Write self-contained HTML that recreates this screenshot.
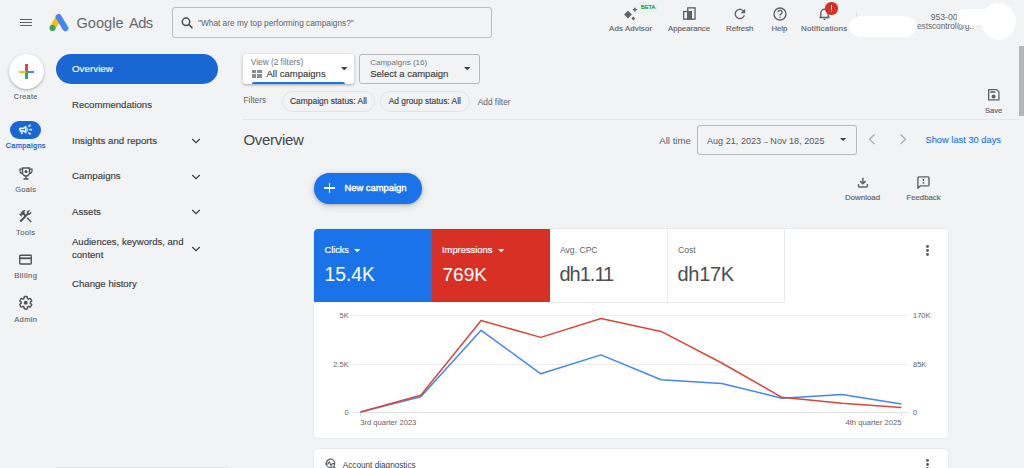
<!DOCTYPE html>
<html><head><meta charset="utf-8">
<style>
html,body{margin:0;padding:0;width:1024px;height:468px;overflow:hidden;background:#f1f3f4;font-family:"Liberation Sans",sans-serif;}
.t{position:absolute;white-space:nowrap;line-height:1;}
.a{position:absolute;}
.g{color:#5f6368;}
.d{color:#3c4043;}
.m{-webkit-text-stroke:0.15px currentColor;}
svg{position:absolute;overflow:visible;}
</style></head><body>

<!-- ===== TOP BAR ===== -->
<div class="a" style="left:20px;top:19px;width:12px;height:1.3px;background:#5f6368"></div>
<div class="a" style="left:20px;top:22px;width:12px;height:1.3px;background:#5f6368"></div>
<div class="a" style="left:20px;top:25.2px;width:12px;height:1.3px;background:#5f6368"></div>

<svg style="left:49px;top:13px" width="21" height="19" viewBox="0 0 21 19">
  <path d="M9.8 4.6 L3.6 14.8" stroke="#fbbc04" stroke-width="6" stroke-linecap="butt"/>
  <path d="M9.6 4 L16.4 15.2" stroke="#4285f4" stroke-width="6" stroke-linecap="round"/>
  <circle cx="3.5" cy="15" r="3" fill="#34a853"/>
</svg>
<div class="t g" style="left:76.5px;top:15.6px;font-size:14.6px;color:#666a6f">Google</div><div class="t g" style="left:129px;top:15.6px;font-size:14.6px;letter-spacing:-0.6px;color:#666a6f">Ads</div>

<div class="a" style="left:172px;top:7.2px;width:318px;height:29px;border:1px solid #babdc1;border-radius:3px;"></div>
<svg style="left:181px;top:16.5px" width="13" height="12" viewBox="0 0 13 12">
  <circle cx="5" cy="4.8" r="3.7" fill="none" stroke="#4a4e53" stroke-width="1.5"/>
  <path d="M7.6 7.4 L11.5 11.3" stroke="#4a4e53" stroke-width="1.6"/>
</svg>
<div class="t g" style="left:198px;top:19px;font-size:8.3px">"What are my top performing campaigns?"</div>

<!-- top right icons -->
<svg style="left:620px;top:5px" width="20" height="18" viewBox="0 0 20 18">
  <path d="M8 5.7 L11.9 9.6 L8 13.5 L4.1 9.6 Z" fill="#5f6368"/>
  <path d="M14.9 2 Q15.3 4.3 17.6 4.7 Q15.3 5.1 14.9 7.4 Q14.5 5.1 12.2 4.7 Q14.5 4.3 14.9 2 Z" fill="#5f6368"/>
  <path d="M13.3 11.6 L15.2 13.5 L13.3 15.4 L11.4 13.5 Z" fill="#5f6368"/>
</svg>
<div class="a" style="left:638.8px;top:3.1px;width:18.9px;height:9.7px;background:#e6f4ea;border-radius:2px"></div>
<div class="t" style="left:641.1px;top:4.6px;font-size:5.5px;color:#1e8e3e;letter-spacing:0.05px;-webkit-text-stroke:0.2px #1e8e3e">BETA</div>
<div class="t g m" style="left:609px;top:24.7px;font-size:7.9px;letter-spacing:0.14px">Ads Advisor</div>

<svg style="left:682px;top:7px" width="15" height="14" viewBox="0 0 15 14">
  <rect x="5.5" y="4" width="4.5" height="8.8" fill="#5f6368"/>
  <rect x="5.75" y="0.85" width="7.3" height="11.3" fill="none" stroke="#5f6368" stroke-width="1.35"/>
  <rect x="1.65" y="4.55" width="4.1" height="7.6" fill="none" stroke="#5f6368" stroke-width="1.35"/>
</svg>
<div class="t g m" style="left:668px;top:24.8px;font-size:7.8px">Appearance</div>

<svg style="left:732.4px;top:5.7px" width="15.8" height="15.8" viewBox="0 0 24 24">
  <path d="M17.65 6.35C16.2 4.9 14.21 4 12 4c-4.42 0-7.99 3.58-7.99 8s3.57 8 7.99 8c3.73 0 6.84-2.55 7.730-6h-2.080c-.82 2.33-3.04 4-5.65 4-3.31 0-6-2.69-6-6s2.69-6 6-6c1.66 0 3.14.69 4.22 1.78L13 11h7V4l-2.35 2.35z" fill="#5f6368"/>
</svg>
<div class="t g m" style="left:726px;top:24.8px;font-size:7.85px">Refresh</div>

<svg style="left:772.5px;top:6.5px" width="14" height="14" viewBox="0 0 14 14">
  <circle cx="7" cy="7" r="6" fill="none" stroke="#5f6368" stroke-width="1.4"/>
  <path d="M5 5.3 A2 2 0 1 1 7.8 7.1 Q7 7.6 7 8.6" fill="none" stroke="#5f6368" stroke-width="1.3"/>
  <circle cx="7" cy="10.3" r="0.8" fill="#5f6368"/>
</svg>
<div class="t g m" style="left:771.5px;top:24.8px;font-size:7.7px">Help</div>

<svg style="left:818px;top:7px" width="14" height="14" viewBox="0 0 14 14">
  <path d="M2 10.5 L2.8 9.5 L2.8 6 A3.7 3.7 0 0 1 10.2 6 L10.2 9.5 L11 10.5 Z" fill="none" stroke="#5f6368" stroke-width="1.4" stroke-linejoin="round"/>
  <rect x="5.5" y="11.6" width="2" height="1.4" fill="#5f6368"/>
</svg>
<div class="a" style="left:825.3px;top:2.3px;width:12.4px;height:12.4px;border-radius:50%;background:#d93025"></div>
<div class="a" style="left:830.6px;top:4.5px;width:1.8px;height:5px;background:#fff;border-radius:1px"></div>
<div class="a" style="left:830.6px;top:10.6px;width:1.8px;height:1.8px;background:#fff;border-radius:1px"></div>
<div class="t g m" style="left:801px;top:24.7px;font-size:7.9px;letter-spacing:0.26px">Notifications</div>

<div class="a" style="left:856px;top:13px;width:1px;height:6px;background:#dadce0"></div>
<div class="t" style="left:930.7px;top:13.3px;font-size:8.6px;color:#63676c">953-00</div>
<div class="t" style="left:917px;top:23.4px;font-size:8.2px;color:#63676c">estscontrol@g..</div>
<!-- white redaction blobs -->
<div class="a" style="left:849.3px;top:15.5px;width:68px;height:21.6px;background:#fff;border-radius:14px/10.8px;"></div>
<div class="a" style="left:957px;top:8.8px;width:35px;height:16.2px;background:#fff;border-radius:6px 0 0 6px/8px 0 0 8px;"></div>
<div class="a" style="left:981.3px;top:3px;width:34.7px;height:37px;background:#fff;border-radius:50%;"></div>

<!-- ===== LEFT RAIL ===== -->
<div class="a" style="left:8.7px;top:53.8px;width:35.5px;height:35.5px;border-radius:50%;background:#fff;box-shadow:0 1px 3px rgba(60,64,67,.3),0 1px 2px rgba(60,64,67,.15)"></div>
<div class="a" style="left:25.2px;top:64px;width:2.4px;height:7.6px;background:#ea4335"></div>
<div class="a" style="left:25.2px;top:71.6px;width:2.4px;height:7.8px;background:#34a853"></div>
<div class="a" style="left:18.6px;top:70.5px;width:7.6px;height:2.2px;background:#fbbc04"></div>
<div class="a" style="left:26.5px;top:70.5px;width:7.6px;height:2.2px;background:#4285f4"></div>
<div class="t g" style="left:-0.23px;width:52px;text-align:center;top:92.59px;font-size:7.3px;letter-spacing:0.35px;-webkit-text-stroke:0.1px #4f5358">Create</div>

<div class="a" style="left:10px;top:120.8px;width:31px;height:18px;border-radius:9px;background:#1a67d2"></div>
<svg style="left:18px;top:121.6px" width="15.2" height="15.2" viewBox="0 0 24 24">
  <path d="M18 11v2h4v-2h-4zm-2 6.61c.96.71 2.21 1.65 3.2 2.39.4-.53.8-1.07 1.2-1.6-.99-.74-2.240-1.68-3.2-2.4-.4.54-.8 1.08-1.2 1.61zM20.4 5.6c-.4-.53-.8-1.070-1.2-1.6-.99.74-2.24 1.68-3.2 2.4.4.53.8 1.07 1.2 1.6.96-.72 2.21-1.65 3.2-2.4zM4 9c-1.1 0-2 .9-2 2v2c0 1.1.9 2 2 2h1v4h2v-4h1l5 3V6L8 9H4zm5.03 1.71L11 9.53v4.94l-1.97-1.18-.48-.29H4v-2h4.550l.48-.29zM15.5 12c0-1.33-.58-2.53-1.5-3.35v6.69c.92-.81 1.5-2.010 1.5-3.34z" fill="#fff" stroke="#fff" stroke-width="0.4"/>
</svg>
<div class="t" style="left:-0.25px;width:52px;text-align:center;top:142.31px;font-size:7.4px;letter-spacing:0.3px;color:#1967d2;-webkit-text-stroke:0.25px #1967d2">Campaigns</div>

<svg style="left:19px;top:166.5px" width="14" height="13" viewBox="0 0 14 13">
  <path d="M3.5 1 L10.5 1 L10.5 5.5 A3.5 3.5 0 0 1 3.5 5.5 Z" fill="none" stroke="#4f5358" stroke-width="1.4"/>
  <path d="M3.5 2.2 L1 2.2 L1 4 A2.5 2.5 0 0 0 3.5 6.5 M10.5 2.2 L13 2.2 L13 4 A2.5 2.5 0 0 1 10.5 6.5" fill="none" stroke="#4f5358" stroke-width="1.2"/>
  <path d="M7 9 L7 11.5 M4.5 12 L9.5 12" stroke="#4f5358" stroke-width="1.3"/>
  <circle cx="7" cy="4.4" r="1.5" fill="#4f5358"/>
</svg>
<div class="t g" style="left:-0.23px;width:52px;text-align:center;top:185.81px;font-size:7.4px;letter-spacing:0.35px;-webkit-text-stroke:0.1px #4f5358">Goals</div>

<svg style="left:19.3px;top:209.6px" width="13" height="12.7" viewBox="2 2.5 20 19.5">
  <path d="M13.78 15.17 L15.2 13.76 L21.56 20.12 L20.15 21.54 Z" fill="#4f5358"/>
  <path d="M17.5 10c1.93 0 3.5-1.57 3.5-3.5 0-.58-.16-1.12-.41-1.6l-2.7 2.7-1.49-1.49 2.7-2.7c-.48-.25-1.02-.41-1.6-.41-1.93 0-3.5 1.57-3.5 3.5 0 .41.08.8.21 1.16l-1.85 1.85-1.78-1.78.71-.71-1.41-1.41L12 3.49c-1.17-1.17-3.07-1.17-4.24 0L4.22 7.03l1.41 1.41H2.81l-.71.71 3.54 3.54.71-.71V9.15l1.41 1.41.71-.71 1.78 1.78-7.41 7.41 2.12 2.12L16.34 9.79c.36.13.75.21 1.16.21z" fill="#4f5358"/>
</svg>
<div class="t g" style="left:-0.23px;width:52px;text-align:center;top:228.84px;font-size:7.6px;letter-spacing:0.35px;-webkit-text-stroke:0.1px #4f5358">Tools</div>

<svg style="left:19px;top:254.3px" width="14" height="12" viewBox="0 0 14 12">
  <rect x="0.75" y="1.25" width="11.5" height="8.7" rx="0.6" fill="none" stroke="#4f5358" stroke-width="1.35"/>
  <rect x="0.75" y="3.4" width="11.5" height="1.8" fill="#4f5358"/>
</svg>
<div class="t g" style="left:-0.23px;width:52px;text-align:center;top:272.35px;font-size:7.7px;letter-spacing:0.35px;-webkit-text-stroke:0.1px #4f5358">Billing</div>

<svg style="left:18.7px;top:296.4px" width="13.5" height="13.5" viewBox="1.5 1.5 21 21">
  <path d="M19.14 12.94c.04-.3.06-.61.06-.94 0-.32-.02-.64-.07-.94l2.03-1.58a.49.49 0 0 0 .12-.61l-1.92-3.32a.488.488 0 0 0-.59-.22l-2.39.96c-.5-.38-1.03-.7-1.62-.94l-.36-2.54a.484.484 0 0 0-.48-.41h-3.84c-.24 0-.43.17-.47.41l-.36 2.54c-.59.24-1.13.57-1.62.94l-2.39-.96c-.22-.08-.47 0-.59.22L2.74 8.87c-.12.21-.08.47.12.61l2.03 1.58c-.05.3-.09.63-.09.94s.2.64.07.94l-2.03 1.58a.49.49 0 0 0-.12.61l1.92 3.32c.12.22.37.29.59.22l2.39-.96c.5.38 1.03.7 1.62.94l.36 2.54c.05.24.24.41.48.41h3.84c.24 0 .44-.17.47-.41l.36-2.54c.59-.24 1.13-.56 1.62-.94l2.39.96c.22.08.47 0 .59-.22l1.92-3.32c.12-.22.07-.47-.12-.61l-2.01-1.58z" fill="none" stroke="#4f5358" stroke-width="2.2"/>
  <circle cx="12" cy="12" r="3" fill="#4f5358"/>
</svg>
<div class="t g" style="left:-0.23px;width:52px;text-align:center;top:316.04px;font-size:7.6px;letter-spacing:0.35px;-webkit-text-stroke:0.1px #4f5358">Admin</div>

<!-- ===== NAV ===== -->
<div class="a" style="left:56px;top:53.5px;width:162px;height:30.5px;border-radius:15.25px;background:#1967d2"></div>
<div class="t m" style="left:72px;top:63.8px;font-size:9.8px;color:#fff">Overview</div>
<div class="t d m" style="left:72px;top:99.7px;font-size:9.6px">Recommendations</div>
<div class="t d m" style="left:72px;top:135.6px;font-size:9.7px">Insights and reports</div>
<div class="t d m" style="left:72px;top:171.3px;font-size:9.65px">Campaigns</div>
<div class="t d m" style="left:72px;top:207px;font-size:9.65px">Assets</div>
<div class="t d m" style="left:72px;top:236.9px;font-size:9.55px">Audiences, keywords, and</div>
<div class="t d m" style="left:72px;top:249.8px;font-size:9.55px">content</div>
<div class="t d m" style="left:72px;top:279px;font-size:9.65px">Change history</div>
<svg style="left:191px;top:137.9px" width="10" height="7" viewBox="0 0 10 7"><path d="M1.2 1 L5 4.7 L8.8 1" fill="none" stroke="#3c4043" stroke-width="1.25"/></svg>
<svg style="left:191px;top:173.6px" width="10" height="7" viewBox="0 0 10 7"><path d="M1.2 1 L5 4.7 L8.8 1" fill="none" stroke="#3c4043" stroke-width="1.25"/></svg>
<svg style="left:191px;top:209.4px" width="10" height="7" viewBox="0 0 10 7"><path d="M1.2 1 L5 4.7 L8.8 1" fill="none" stroke="#3c4043" stroke-width="1.25"/></svg>
<svg style="left:191px;top:245.8px" width="10" height="7" viewBox="0 0 10 7"><path d="M1.2 1 L5 4.7 L8.8 1" fill="none" stroke="#3c4043" stroke-width="1.25"/></svg>

<div class="a" style="left:56px;top:466.8px;width:172px;height:1.2px;background:#e1e3e6"></div>

<!-- ===== FILTER BAR ===== -->
<div class="a" style="left:243.3px;top:53.7px;width:111px;height:30.5px;background:#fff;border-radius:3px;box-shadow:0 1px 2px rgba(60,64,67,.3),0 1px 3px 1px rgba(60,64,67,.1);overflow:hidden">
  <div class="a" style="left:8.8px;top:27.9px;width:93px;height:3px;background:#1a73e8;border-radius:2px 2px 0 0"></div>
</div>
<div class="t" style="left:250.8px;top:58px;font-size:8.3px;color:#6f7378">View (2 filters)</div>
<div class="a" style="left:251.5px;top:70.2px;width:4.8px;height:3.2px;background:#8a8e93"></div>
<div class="a" style="left:257.3px;top:70.2px;width:4.8px;height:3.2px;background:#8a8e93"></div>
<div class="a" style="left:251.5px;top:74.4px;width:4.8px;height:3.2px;background:#8a8e93"></div>
<div class="a" style="left:257.3px;top:74.4px;width:4.8px;height:3.2px;background:#8a8e93"></div>
<div class="t d m" style="left:266.5px;top:69.4px;font-size:9.5px">All campaigns</div>
<svg style="left:341px;top:67px" width="7" height="4" viewBox="0 0 7 4"><path d="M0 0 L6.5 0 L3.25 3.6 Z" fill="#3c4043"/></svg>

<div class="a" style="left:359.3px;top:53.7px;width:118.3px;height:28.5px;border:1px solid #b5b9bd;border-radius:3px"></div>
<div class="t" style="left:370.2px;top:59px;font-size:8px;color:#70757a">Campaigns (16)</div>
<div class="t d m" style="left:370.2px;top:68.9px;font-size:9.5px">Select a campaign</div>
<svg style="left:463.5px;top:67px" width="7" height="4" viewBox="0 0 7 4"><path d="M0 0 L6.5 0 L3.25 3.2 Z" fill="#3c4043"/></svg>

<div class="t g" style="left:243.5px;top:95.6px;font-size:8.3px">Filters</div>
<div class="a" style="left:281.5px;top:91.4px;width:91.2px;height:18.5px;border:1px solid #e0e2e5;border-radius:11px"></div>
<div class="t d m" style="left:290px;top:97.2px;font-size:8.45px">Campaign status: All</div>
<div class="a" style="left:380.2px;top:91.4px;width:87.5px;height:18.5px;border:1px solid #e0e2e5;border-radius:11px"></div>
<div class="t d m" style="left:388.7px;top:97.2px;font-size:8.4px">Ad group status: All</div>
<div class="t g" style="left:477.8px;top:97.6px;font-size:8.3px">Add filter</div>

<svg style="left:988px;top:88.7px" width="12" height="12" viewBox="0 0 12 12">
  <path d="M0.65 0.65 L8.6 0.65 L10.95 3 L10.95 10.95 L0.65 10.95 Z" fill="none" stroke="#5f6368" stroke-width="1.3" stroke-linejoin="round"/>
  <rect x="2.2" y="2.2" width="5.2" height="1.6" fill="#5f6368"/>
  <circle cx="5.6" cy="7.5" r="2" fill="#5f6368"/>
</svg>
<div class="t g m" style="left:985px;top:106.5px;font-size:7.6px">Save</div>

<div class="a" style="left:243px;top:118.5px;width:776px;height:1px;background:#e4e6e9"></div>
<div class="a" style="left:1018.8px;top:45.5px;width:5.2px;height:70.5px;background:#b5b5b5"></div>

<!-- ===== OVERVIEW ROW ===== -->
<div class="t" style="left:243.5px;top:132px;font-size:15px;letter-spacing:-0.3px;color:#46494e">Overview</div>
<div class="t g" style="left:659.2px;top:135.9px;font-size:9.7px">All time</div>
<div class="a" style="left:696.8px;top:124.6px;width:158.2px;height:28.3px;border:1px solid #b5b9bd;border-radius:3px"></div>
<div class="t" style="left:707px;top:136.5px;font-size:9.1px;color:#55595e">Aug 21, 2023 <span style="font-size:7.5px">–</span> Nov 18, 2025</div>
<svg style="left:840.3px;top:138.1px" width="7" height="4" viewBox="0 0 7 4"><path d="M0 0 L6.2 0 L3.1 3 Z" fill="#3c4043"/></svg>
<svg style="left:867px;top:134px" width="10" height="11" viewBox="0 0 10 11"><path d="M7.5 0.5 L2.5 5.3 L7.5 10.1" fill="none" stroke="#a9adb1" stroke-width="1.3"/></svg>
<svg style="left:897.5px;top:134px" width="10" height="11" viewBox="0 0 10 11"><path d="M2.5 0.5 L7.5 5.3 L2.5 10.1" fill="none" stroke="#a9adb1" stroke-width="1.3"/></svg>
<div class="t" style="left:925.5px;top:135.8px;font-size:9.3px;color:#1a73e8;-webkit-text-stroke:0.1px #1a73e8">Show last 30 days</div>

<!-- ===== ACTIONS ===== -->
<div class="a" style="left:313.6px;top:172.9px;width:108.8px;height:30.8px;border-radius:15.4px;background:#1a73e8;box-shadow:0 1px 3px rgba(60,64,67,.3),0 2px 6px 1px rgba(60,64,67,.15)"></div>
<div class="a" style="left:323.8px;top:187.2px;width:11px;height:1.5px;background:#fff"></div>
<div class="a" style="left:328.6px;top:182.5px;width:1.5px;height:10.5px;background:#fff"></div>
<div class="t" style="left:344.5px;top:183.4px;font-size:9.4px;color:#fff;-webkit-text-stroke:0.4px #fff">New campaign</div>

<svg style="left:857px;top:177px" width="12" height="11" viewBox="0 0 12 11">
  <path d="M5.85 0.7 L5.85 6.6 M3.1 4.1 L5.85 6.8 L8.6 4.1" fill="none" stroke="#5f6368" stroke-width="1.5"/>
  <path d="M1.5 7 L1.5 9.1 Q1.5 10 2.4 10 L9.6 10 Q10.4 10 10.4 9.1 L10.4 7" fill="none" stroke="#5f6368" stroke-width="1.4"/>
</svg>
<div class="t g m" style="left:845px;top:193.8px;font-size:7.9px">Download</div>
<svg style="left:917px;top:176px" width="14" height="13" viewBox="0 0 14 13">
  <path d="M0.9 1.8 Q0.9 0.9 1.8 0.9 L11.1 0.9 Q12 0.9 12 1.8 L12 9 Q12 9.9 11.1 9.9 L3.3 9.9 L0.9 12.3 Z" fill="none" stroke="#5f6368" stroke-width="1.4" stroke-linejoin="round"/>
  <rect x="5.7" y="2.9" width="1.5" height="2.2" fill="#5f6368"/>
  <rect x="5.7" y="6.1" width="1.5" height="1.6" fill="#5f6368"/>
</svg>
<div class="t g m" style="left:906.5px;top:193.9px;font-size:7.75px">Feedback</div>

<!-- ===== CARD ===== -->
<div class="a" style="left:313.9px;top:228.8px;width:634.2px;height:209.4px;background:#fff;border-radius:4px;box-shadow:0 0 0 0.5px #dfe1e4;overflow:hidden">
  <div class="a" style="left:0;top:0;width:118.1px;height:73.5px;background:#1a73e8"></div>
  <div class="a" style="left:118.1px;top:0;width:118px;height:73.5px;background:#d93025"></div>
  <div class="a" style="left:236.1px;top:0;width:117.3px;height:72.8px;border-right:1px solid #e8eaed;border-bottom:1px solid #e8eaed"></div>
  <div class="a" style="left:353.4px;top:0;width:116.6px;height:72.8px;border-right:1px solid #e8eaed;border-bottom:1px solid #e8eaed"></div>
</div>
<div class="t" style="left:324.6px;top:245.6px;font-size:9.15px;color:#fff;-webkit-text-stroke:0.2px #fff">Clicks</div>
<svg style="left:354.2px;top:248.7px" width="7" height="4" viewBox="0 0 7 4"><path d="M0 0 L6.4 0 L3.2 3.3 Z" fill="#fff"/></svg>
<div class="t" style="left:324.5px;top:264.8px;font-size:19.3px;color:#fff">15.4K</div>
<div class="t" style="left:442px;top:245.6px;font-size:9.35px;color:#fff;-webkit-text-stroke:0.2px #fff">Impressions</div>
<svg style="left:497.8px;top:248.7px" width="7" height="4" viewBox="0 0 7 4"><path d="M0 0 L6.4 0 L3.2 3.3 Z" fill="#fff"/></svg>
<div class="t" style="left:442.5px;top:264.8px;font-size:19.1px;color:#fff">769K</div>
<div class="t g" style="left:560px;top:246px;font-size:8.6px">Avg. CPC</div>
<div class="t d" style="left:559.5px;top:264.3px;font-size:20px;letter-spacing:-1px;color:#4a4e53">dh1.11</div>
<div class="t g" style="left:678px;top:246px;font-size:8.6px">Cost</div>
<div class="t d" style="left:677.5px;top:264.3px;font-size:20px;letter-spacing:-0.3px;color:#4a4e53">dh17K</div>
<div class="a" style="left:926.3px;top:245.4px;width:2.8px;height:2.8px;border-radius:50%;background:#5f6368"></div>
<div class="a" style="left:926.3px;top:249.4px;width:2.8px;height:2.8px;border-radius:50%;background:#5f6368"></div>
<div class="a" style="left:926.3px;top:253.4px;width:2.8px;height:2.8px;border-radius:50%;background:#5f6368"></div>

<!-- chart -->
<div class="a" style="left:352.5px;top:315px;width:554px;height:1px;background:#eceef0"></div>
<div class="a" style="left:352.5px;top:363.7px;width:554px;height:1px;background:#eceef0"></div>
<div class="a" style="left:352.5px;top:412px;width:554px;height:1px;background:#e0e0e0"></div>
<div class="t g" style="left:300px;width:48.7px;text-align:right;top:312.2px;font-size:7.5px">5K</div>
<div class="t g" style="left:300px;width:48.7px;text-align:right;top:360.9px;font-size:7.5px">2.5K</div>
<div class="t g" style="left:300px;width:48.7px;text-align:right;top:409.2px;font-size:7.5px">0</div>
<div class="t g" style="left:913px;top:312.2px;font-size:7.5px">170K</div>
<div class="t g" style="left:913px;top:360.9px;font-size:7.5px">85K</div>
<div class="t g" style="left:913px;top:409.2px;font-size:7.5px">0</div>
<div class="t g" style="left:360.2px;top:418.6px;font-size:7.6px">3rd quarter 2023</div>
<div class="t g" style="left:800px;width:101.5px;text-align:right;top:418.8px;font-size:7.65px">4th quarter 2025</div>
<div class="a" style="left:360px;top:412px;width:1px;height:4px;background:#dadce0"></div>
<div class="a" style="left:901px;top:412px;width:1px;height:4px;background:#dadce0"></div>
<svg style="left:0;top:0" width="1024" height="468" viewBox="0 0 1024 468">
  <polyline points="360.5,412 420.8,396.7 481.1,330.3 540.8,373.8 601,354.9 661.1,379.7 721.8,383.5 781.8,398.2 841.9,394.4 901.4,404" fill="none" stroke="#4285f4" stroke-width="1.5" stroke-linejoin="round"/>
  <polyline points="360.5,412 420.8,395.2 481.1,320.5 540.8,337.4 601,318.5 661.1,331.4 721.8,363 781.8,397.3 841.9,403.2 901.4,407.5" fill="none" stroke="#d9463a" stroke-width="1.5" stroke-linejoin="round"/>
</svg>

<!-- account diagnostics card -->
<div class="a" style="left:313.9px;top:448.9px;width:634.2px;height:40px;background:#fff;border-radius:4px;box-shadow:0 0 0 0.5px #dfe1e4"></div>
<svg style="left:324px;top:458px" width="14" height="12" viewBox="0 0 14 12">
  <circle cx="6.5" cy="5.4" r="4.2" fill="none" stroke="#5f6368" stroke-width="1.3"/>
  <path d="M1 6 L4 6 L5.3 3.8 L7 7.8 L8.3 5.6 L10 5.6" fill="none" stroke="#5f6368" stroke-width="1.1"/>
  <path d="M9.5 8.6 L11.5 10.8" stroke="#5f6368" stroke-width="1.5"/>
</svg>
<div class="t d" style="left:342.8px;top:461.9px;font-size:8.2px">Account diagnostics</div>
<div class="a" style="left:926.3px;top:458.8px;width:2.8px;height:2.8px;border-radius:50%;background:#5f6368"></div>
<div class="a" style="left:926.3px;top:462.8px;width:2.8px;height:2.8px;border-radius:50%;background:#5f6368"></div>
<div class="a" style="left:926.3px;top:466.8px;width:2.8px;height:2.8px;border-radius:50%;background:#5f6368"></div>

</body></html>
